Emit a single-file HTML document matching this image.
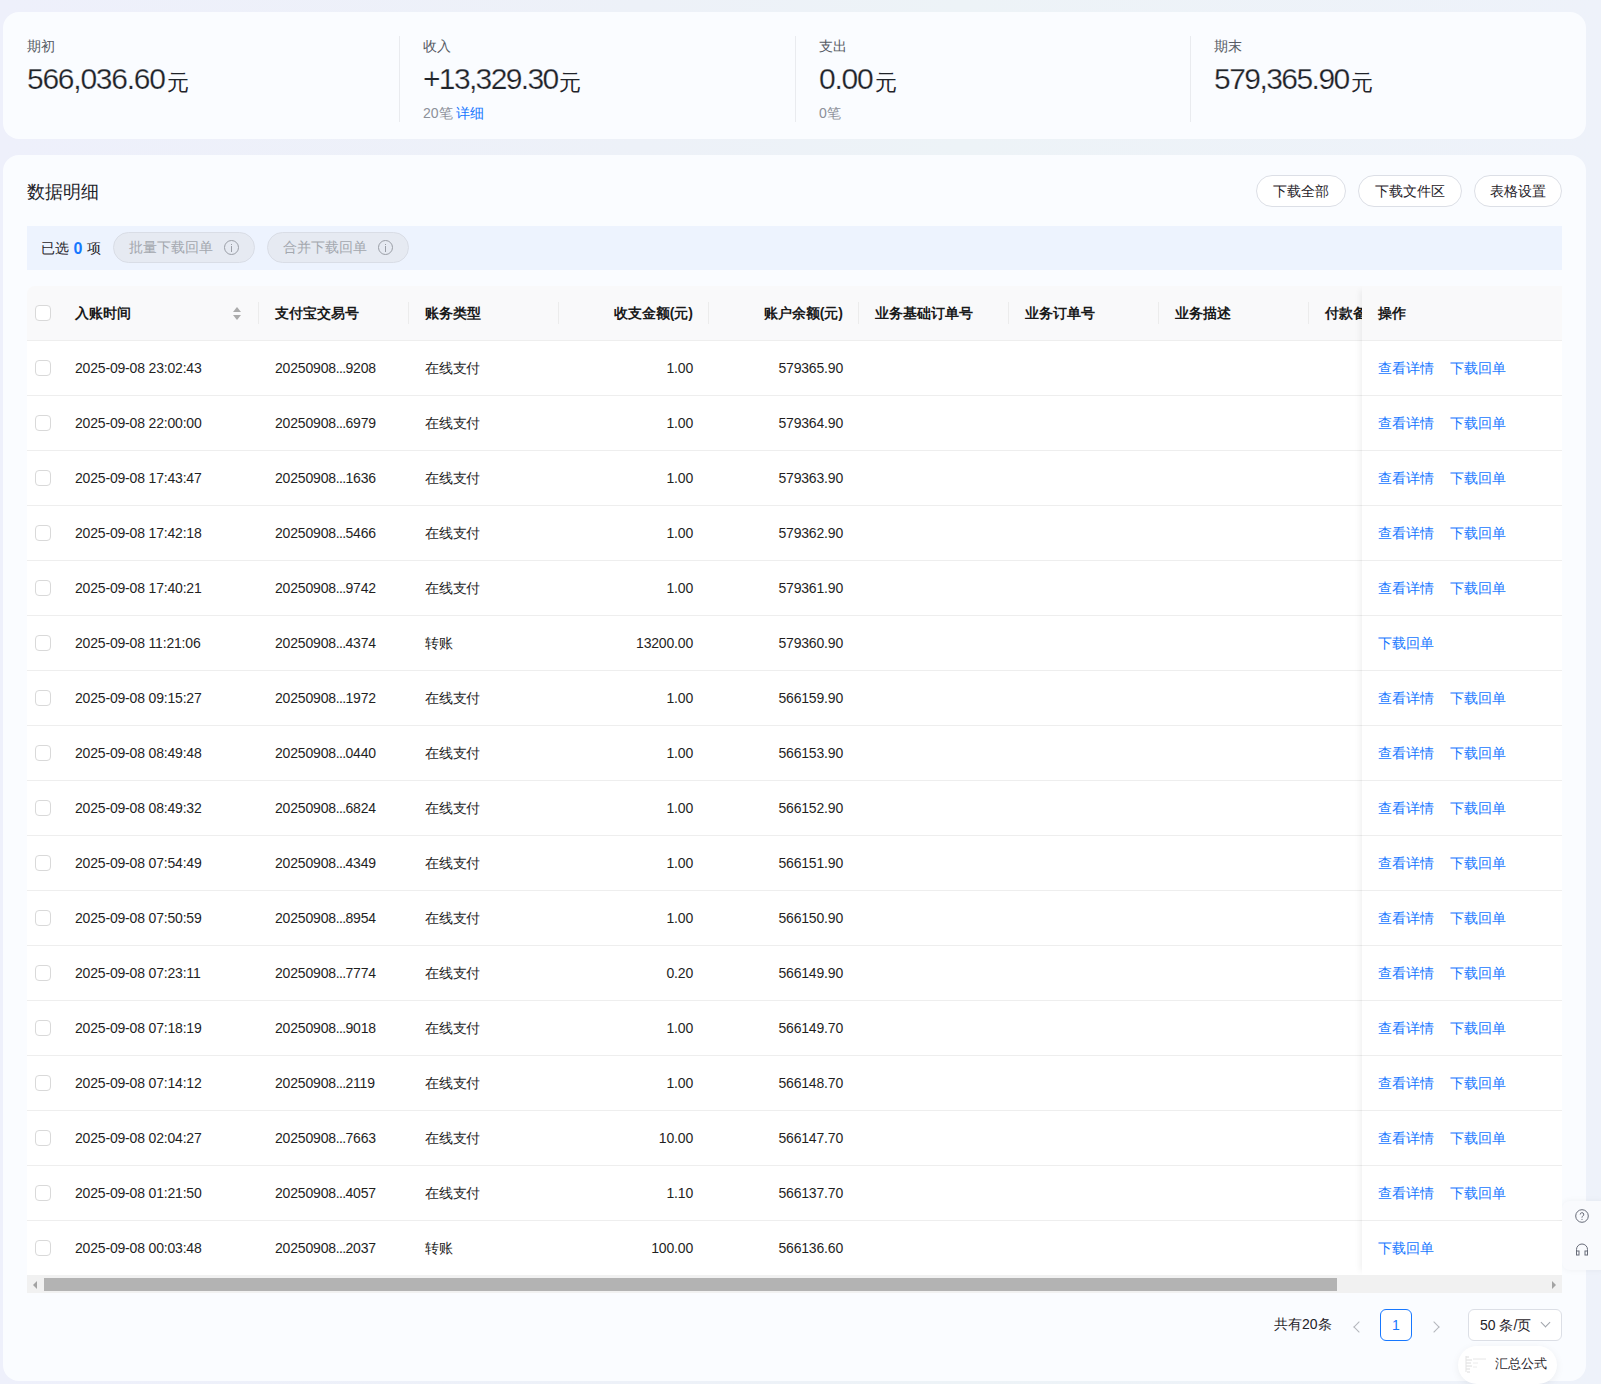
<!DOCTYPE html>
<html><head><meta charset="utf-8"><title>数据明细</title>
<style>
*{box-sizing:border-box;margin:0;padding:0}
html,body{width:1601px;height:1384px;overflow:hidden}
body{background:linear-gradient(90deg,#eef0fb 0%,#edf1f8 40%,#edf3f7 60%,#eef2fa 100%);font-family:"Liberation Sans",sans-serif;color:#1f1f1f;position:relative;font-size:14px}
.card1{position:absolute;left:3px;top:12px;width:1583px;height:127px;border-radius:16px;background:#fafcff}
.stat{position:absolute;top:0}
.s1{left:24px}.s2{left:420px}.s3{left:816px}.s4{left:1211px}
.lab{position:absolute;top:26.5px;left:0;font-size:13.6px;color:#555a63;white-space:nowrap;line-height:16px}
.num{position:absolute;top:50px;left:0;font-size:30px;line-height:34px;color:#1f2329;white-space:nowrap;letter-spacing:-1.2px;-webkit-text-stroke:0.25px #fafcff}
.yuan{-webkit-text-stroke:0;font-size:22px;letter-spacing:0;margin-left:2px;position:relative;top:1px}
.sub{position:absolute;top:93px;left:0;font-size:14px;color:#8c9099;white-space:nowrap;line-height:16px}
.link{color:#1677ff}
.vdiv{position:absolute;top:24px;width:1px;height:86px;background:#e9ebef}
.card2{position:absolute;left:3px;top:155px;width:1583px;height:1226px;border-radius:16px;background:#fafcff}
.title{position:absolute;left:24px;top:25px;font-size:18px;line-height:24px;color:#1f2329}
.btn{position:absolute;top:20px;height:32px;border:1px solid #dcdfe6;border-radius:16px;background:#fff;font-size:14px;line-height:30px;text-align:center;color:#1f2329}
.b1{left:1253px;width:90px}.b2{left:1355px;width:104px}.b3{left:1471px;width:88px}
.selbar{position:absolute;left:24px;top:71px;width:1535px;height:44px;background:#edf3fe}
.selt{position:absolute;left:14px;top:13px;font-size:14px;line-height:18px;color:#1f2329}
.selt b{color:#1677ff;font-weight:bold;font-size:16px;margin:0 1px 0 0.5px;position:relative;top:1px}
.pill{position:absolute;top:6px;height:31px;border:1px solid #d9dde6;border-radius:16px;background:#e6eaf2;color:#a3a7ae;font-size:14px;line-height:29px;padding-left:15px}
.p1{left:86px;width:142px}.p2{left:240px;width:142px}
.info{position:absolute;right:15px;top:7px;width:15px;height:15px;border:1.3px solid #9a9ea6;border-radius:50%}
.info:before{content:"";position:absolute;left:5.6px;top:2.6px;width:1.5px;height:1.5px;background:#9a9ea6}
.info:after{content:"";position:absolute;left:5.6px;top:5.2px;width:1.5px;height:5.5px;background:#9a9ea6}
.table{position:absolute;left:27px;top:286px;width:1535px;height:1008px;overflow:hidden;border-radius:8px 0 0 0}
.thead{position:absolute;left:0;top:0;width:1535px;height:55px;background:#f9f9fa;border-bottom:1px solid #eeeeee}
.tr{position:absolute;left:0;width:1535px;height:55px;background:#fff;border-bottom:1px solid #eeeeee}
.table .tr{margin-top:-285px}
.cb{position:absolute;left:8px;width:16px;height:16px;border:1px solid #d9d9d9;border-radius:4px;background:#fff}
.thead .cb{top:19px}
.tr .cb{top:19px}
.h,.c{position:absolute;white-space:nowrap;font-size:14px;line-height:20px}
.h{top:17px;font-weight:bold;color:#1a1a1a}
.c{top:17px;color:#1f1f1f;letter-spacing:-0.18px}
.date{left:48px}.no{left:248px}.typ{left:398px}
.amt{right:869px;text-align:right}.bal{right:719px;text-align:right}
.c7{left:848px}.c8{left:998px}.c9{left:1148px}.c10{left:1298px}
.dv{position:absolute;top:16px;width:1px;height:22px;background:#ececec}
.dots{letter-spacing:-0.7px}
.sort{position:absolute;left:206px;top:21px;width:8px;height:14px}
.sort:before{content:"";position:absolute;left:0;top:0;border-left:4px solid transparent;border-right:4px solid transparent;border-bottom:5px solid #ababab}
.sort:after{content:"";position:absolute;left:0;top:7.5px;border-left:4px solid transparent;border-right:4px solid transparent;border-top:5px solid #ababab}
.fixcol{position:absolute;left:1335px;top:0;width:200px;height:989px;box-shadow:-6px 0 6px -4px rgba(0,0,0,0.06)}
.fixhead{position:absolute;left:0;top:0;width:200px;height:54px;background:#f9f9fa;font-weight:bold;font-size:14px;line-height:20px;padding:17px 16px;color:#1a1a1a}
.ops{position:absolute;left:1335px;top:0;width:200px;height:54px;background:#fff;padding:17px 16px;font-size:14px;line-height:20px;white-space:nowrap;z-index:2}
.ops a{color:#1677ff;text-decoration:none}
.ops a.l2{margin-left:16px}
.scroll{position:absolute;left:0;top:989px;width:1535px;height:18px;background:#f1f1f1}
.thumb{position:absolute;left:17px;top:3px;width:1293px;height:13px;background:#b3b3b3}
.arl{position:absolute;left:6px;top:6px;border-top:4px solid transparent;border-bottom:4px solid transparent;border-right:4px solid #a3a3a3}
.arr{position:absolute;right:6px;top:6px;border-top:4px solid transparent;border-bottom:4px solid transparent;border-left:4px solid #a3a3a3}
.pager{position:absolute;left:0;top:0}
.total{position:absolute;left:1274px;top:1314px;font-size:14px;line-height:20px;color:#1f2329;white-space:nowrap}
.prev,.next{position:absolute;top:1322px;width:8px;height:8px;border-left:1.2px solid #b3b6bc;border-bottom:1.2px solid #b3b6bc}
.prev{left:1355px;top:1323px;transform:rotate(45deg)}
.next{left:1430px;top:1323px;transform:rotate(-135deg)}
.pg{position:absolute;left:1380px;top:1309px;width:32px;height:32px;border:1px solid #1677ff;border-radius:6px;color:#1677ff;font-size:14px;line-height:30px;text-align:center;background:#fff}
.sel{position:absolute;left:1468px;top:1309px;width:94px;height:32px;border:1px solid #dcdfe6;border-radius:6px;background:#fff;font-size:14px;line-height:30px;padding-left:11px;color:#1f2329;white-space:nowrap}
.chev{position:absolute;right:12px;top:9px;width:7px;height:7px;border-right:1px solid #a0a4ab;border-bottom:1px solid #a0a4ab;transform:rotate(45deg)}
.huizong{position:absolute;left:1458px;top:1346px;width:99px;height:38px;border-radius:19px;background:#fff;box-shadow:0 2px 8px rgba(0,0,0,0.06);font-size:13px;line-height:36px;padding-left:37px;color:#1f2329}
.thumbimg{position:absolute;left:7px;top:9px;width:22px;height:18px}
.float{position:absolute;left:1562px;top:1201px;width:46px;height:69px;border-radius:8px;background:#f9fafd;box-shadow:0 0 6px rgba(0,0,0,0.05)}
.float .q{position:absolute;left:13px;top:8px}
.float .hp{position:absolute;left:13px;top:42px}

.n{}

</style></head><body>
<div class="bgglow"></div>
<div class="card1">
  <div class="stat s1"><div class="lab">期初</div><div class="num" style="letter-spacing:-1.25px"><span class="n">566,036.60</span><span class="yuan">元</span></div></div>
  <div class="vdiv" style="left:396px"></div>
  <div class="stat s2"><div class="lab">收入</div><div class="num" style="letter-spacing:-1.65px"><span class="n">+13,329.30</span><span class="yuan">元</span></div><div class="sub">20笔 <span class="link">详细</span></div></div>
  <div class="vdiv" style="left:792px"></div>
  <div class="stat s3"><div class="lab">支出</div><div class="num"><span class="n">0.00</span><span class="yuan">元</span></div><div class="sub">0笔</div></div>
  <div class="vdiv" style="left:1187px"></div>
  <div class="stat s4"><div class="lab">期末</div><div class="num" style="letter-spacing:-1.55px"><span class="n">579,365.90</span><span class="yuan">元</span></div></div>
</div>
<div class="card2">
  <div class="title">数据明细</div>
  <div class="btn b1">下载全部</div>
  <div class="btn b2">下载文件区</div>
  <div class="btn b3">表格设置</div>
  <div class="selbar"><span class="selt">已选 <b>0</b> 项</span>
    <span class="pill p1">批量下载回单<i class="info"></i></span>
    <span class="pill p2">合并下载回单<i class="info"></i></span>
  </div>
</div>
<div class="table">
  <div class="thead">
    <span class="cb"></span>
    <span class="h date">入账时间</span><i class="sort"></i>
    <span class="h no">支付宝交易号</span>
    <span class="h typ">账务类型</span>
    <span class="h amt">收支金额(元)</span>
    <span class="h bal">账户余额(元)</span>
    <span class="h c7">业务基础订单号</span>
    <span class="h c8">业务订单号</span>
    <span class="h c9">业务描述</span>
    <span class="h c10">付款备注</span>
    <i class="dv" style="left:231px"></i><i class="dv" style="left:381px"></i><i class="dv" style="left:531px"></i><i class="dv" style="left:681px"></i><i class="dv" style="left:831px"></i><i class="dv" style="left:981px"></i><i class="dv" style="left:1131px"></i><i class="dv" style="left:1281px"></i>
  </div>
<div class="tr" style="top:340px"><span class="cb"></span><span class="c date">2025-09-08 23:02:43</span><span class="c no">20250908<span class=dots>...</span>9208</span><span class="c typ">在线支付</span><span class="c amt">1.00</span><span class="c bal">579365.90</span><div class="ops"><a>查看详情</a><a class="l2">下载回单</a></div></div>
<div class="tr" style="top:395px"><span class="cb"></span><span class="c date">2025-09-08 22:00:00</span><span class="c no">20250908<span class=dots>...</span>6979</span><span class="c typ">在线支付</span><span class="c amt">1.00</span><span class="c bal">579364.90</span><div class="ops"><a>查看详情</a><a class="l2">下载回单</a></div></div>
<div class="tr" style="top:450px"><span class="cb"></span><span class="c date">2025-09-08 17:43:47</span><span class="c no">20250908<span class=dots>...</span>1636</span><span class="c typ">在线支付</span><span class="c amt">1.00</span><span class="c bal">579363.90</span><div class="ops"><a>查看详情</a><a class="l2">下载回单</a></div></div>
<div class="tr" style="top:505px"><span class="cb"></span><span class="c date">2025-09-08 17:42:18</span><span class="c no">20250908<span class=dots>...</span>5466</span><span class="c typ">在线支付</span><span class="c amt">1.00</span><span class="c bal">579362.90</span><div class="ops"><a>查看详情</a><a class="l2">下载回单</a></div></div>
<div class="tr" style="top:560px"><span class="cb"></span><span class="c date">2025-09-08 17:40:21</span><span class="c no">20250908<span class=dots>...</span>9742</span><span class="c typ">在线支付</span><span class="c amt">1.00</span><span class="c bal">579361.90</span><div class="ops"><a>查看详情</a><a class="l2">下载回单</a></div></div>
<div class="tr" style="top:615px"><span class="cb"></span><span class="c date">2025-09-08 11:21:06</span><span class="c no">20250908<span class=dots>...</span>4374</span><span class="c typ">转账</span><span class="c amt">13200.00</span><span class="c bal">579360.90</span><div class="ops"><a>下载回单</a></div></div>
<div class="tr" style="top:670px"><span class="cb"></span><span class="c date">2025-09-08 09:15:27</span><span class="c no">20250908<span class=dots>...</span>1972</span><span class="c typ">在线支付</span><span class="c amt">1.00</span><span class="c bal">566159.90</span><div class="ops"><a>查看详情</a><a class="l2">下载回单</a></div></div>
<div class="tr" style="top:725px"><span class="cb"></span><span class="c date">2025-09-08 08:49:48</span><span class="c no">20250908<span class=dots>...</span>0440</span><span class="c typ">在线支付</span><span class="c amt">1.00</span><span class="c bal">566153.90</span><div class="ops"><a>查看详情</a><a class="l2">下载回单</a></div></div>
<div class="tr" style="top:780px"><span class="cb"></span><span class="c date">2025-09-08 08:49:32</span><span class="c no">20250908<span class=dots>...</span>6824</span><span class="c typ">在线支付</span><span class="c amt">1.00</span><span class="c bal">566152.90</span><div class="ops"><a>查看详情</a><a class="l2">下载回单</a></div></div>
<div class="tr" style="top:835px"><span class="cb"></span><span class="c date">2025-09-08 07:54:49</span><span class="c no">20250908<span class=dots>...</span>4349</span><span class="c typ">在线支付</span><span class="c amt">1.00</span><span class="c bal">566151.90</span><div class="ops"><a>查看详情</a><a class="l2">下载回单</a></div></div>
<div class="tr" style="top:890px"><span class="cb"></span><span class="c date">2025-09-08 07:50:59</span><span class="c no">20250908<span class=dots>...</span>8954</span><span class="c typ">在线支付</span><span class="c amt">1.00</span><span class="c bal">566150.90</span><div class="ops"><a>查看详情</a><a class="l2">下载回单</a></div></div>
<div class="tr" style="top:945px"><span class="cb"></span><span class="c date">2025-09-08 07:23:11</span><span class="c no">20250908<span class=dots>...</span>7774</span><span class="c typ">在线支付</span><span class="c amt">0.20</span><span class="c bal">566149.90</span><div class="ops"><a>查看详情</a><a class="l2">下载回单</a></div></div>
<div class="tr" style="top:1000px"><span class="cb"></span><span class="c date">2025-09-08 07:18:19</span><span class="c no">20250908<span class=dots>...</span>9018</span><span class="c typ">在线支付</span><span class="c amt">1.00</span><span class="c bal">566149.70</span><div class="ops"><a>查看详情</a><a class="l2">下载回单</a></div></div>
<div class="tr" style="top:1055px"><span class="cb"></span><span class="c date">2025-09-08 07:14:12</span><span class="c no">20250908<span class=dots>...</span>2119</span><span class="c typ">在线支付</span><span class="c amt">1.00</span><span class="c bal">566148.70</span><div class="ops"><a>查看详情</a><a class="l2">下载回单</a></div></div>
<div class="tr" style="top:1110px"><span class="cb"></span><span class="c date">2025-09-08 02:04:27</span><span class="c no">20250908<span class=dots>...</span>7663</span><span class="c typ">在线支付</span><span class="c amt">10.00</span><span class="c bal">566147.70</span><div class="ops"><a>查看详情</a><a class="l2">下载回单</a></div></div>
<div class="tr" style="top:1165px"><span class="cb"></span><span class="c date">2025-09-08 01:21:50</span><span class="c no">20250908<span class=dots>...</span>4057</span><span class="c typ">在线支付</span><span class="c amt">1.10</span><span class="c bal">566137.70</span><div class="ops"><a>查看详情</a><a class="l2">下载回单</a></div></div>
<div class="tr" style="top:1220px"><span class="cb"></span><span class="c date">2025-09-08 00:03:48</span><span class="c no">20250908<span class=dots>...</span>2037</span><span class="c typ">转账</span><span class="c amt">100.00</span><span class="c bal">566136.60</span><div class="ops"><a>下载回单</a></div></div>

  <div class="fixcol"><div class="fixhead">操作</div></div>
  <div class="scroll"><i class="arl"></i><i class="thumb"></i><i class="arr"></i></div>
</div>
<div class="pager">
  <span class="total">共有20条</span>
  <span class="prev"></span>
  <span class="pg">1</span>
  <span class="next"></span>
  <span class="sel">50 条/页<i class="chev"></i></span>
</div>
<div class="huizong"><svg class="thumbimg" viewBox="0 0 22 18"><g stroke="#dcdcdc" stroke-width="1"><path d="M1 2h3M1 5h6M1 8h5M1 11h6M1 14h4M2 17h3"/><path d="M8 4h13" stroke="#e6e6e6"/><path d="M8 8h5M8 12h4" stroke="#ececec"/></g><path d="M1 1v16" stroke="#e3e3e3"/></svg>汇总公式</div>
<div class="float">
  <svg class="q" width="14" height="14" viewBox="0 0 14 14"><circle cx="7" cy="7" r="6.3" fill="none" stroke="#676b78" stroke-width="1"/><path d="M5.2 5.5a1.8 1.8 0 1 1 2.5 1.65c-.45.2-.7.5-.7 1v.55" fill="none" stroke="#676b78" stroke-width="1"/><circle cx="7" cy="10.3" r=".6" fill="#676b78"/></svg>
  <svg class="hp" width="14" height="14" viewBox="0 0 14 14"><path d="M1.5 11.5V6.5a5.5 5.5 0 0 1 11 0v5" fill="none" stroke="#676b78" stroke-width="1"/><rect x="1.5" y="8" width="2.5" height="4" fill="none" stroke="#676b78" stroke-width="1"/><rect x="10" y="8" width="2.5" height="4" fill="none" stroke="#676b78" stroke-width="1"/></svg>
</div>
</body></html>
